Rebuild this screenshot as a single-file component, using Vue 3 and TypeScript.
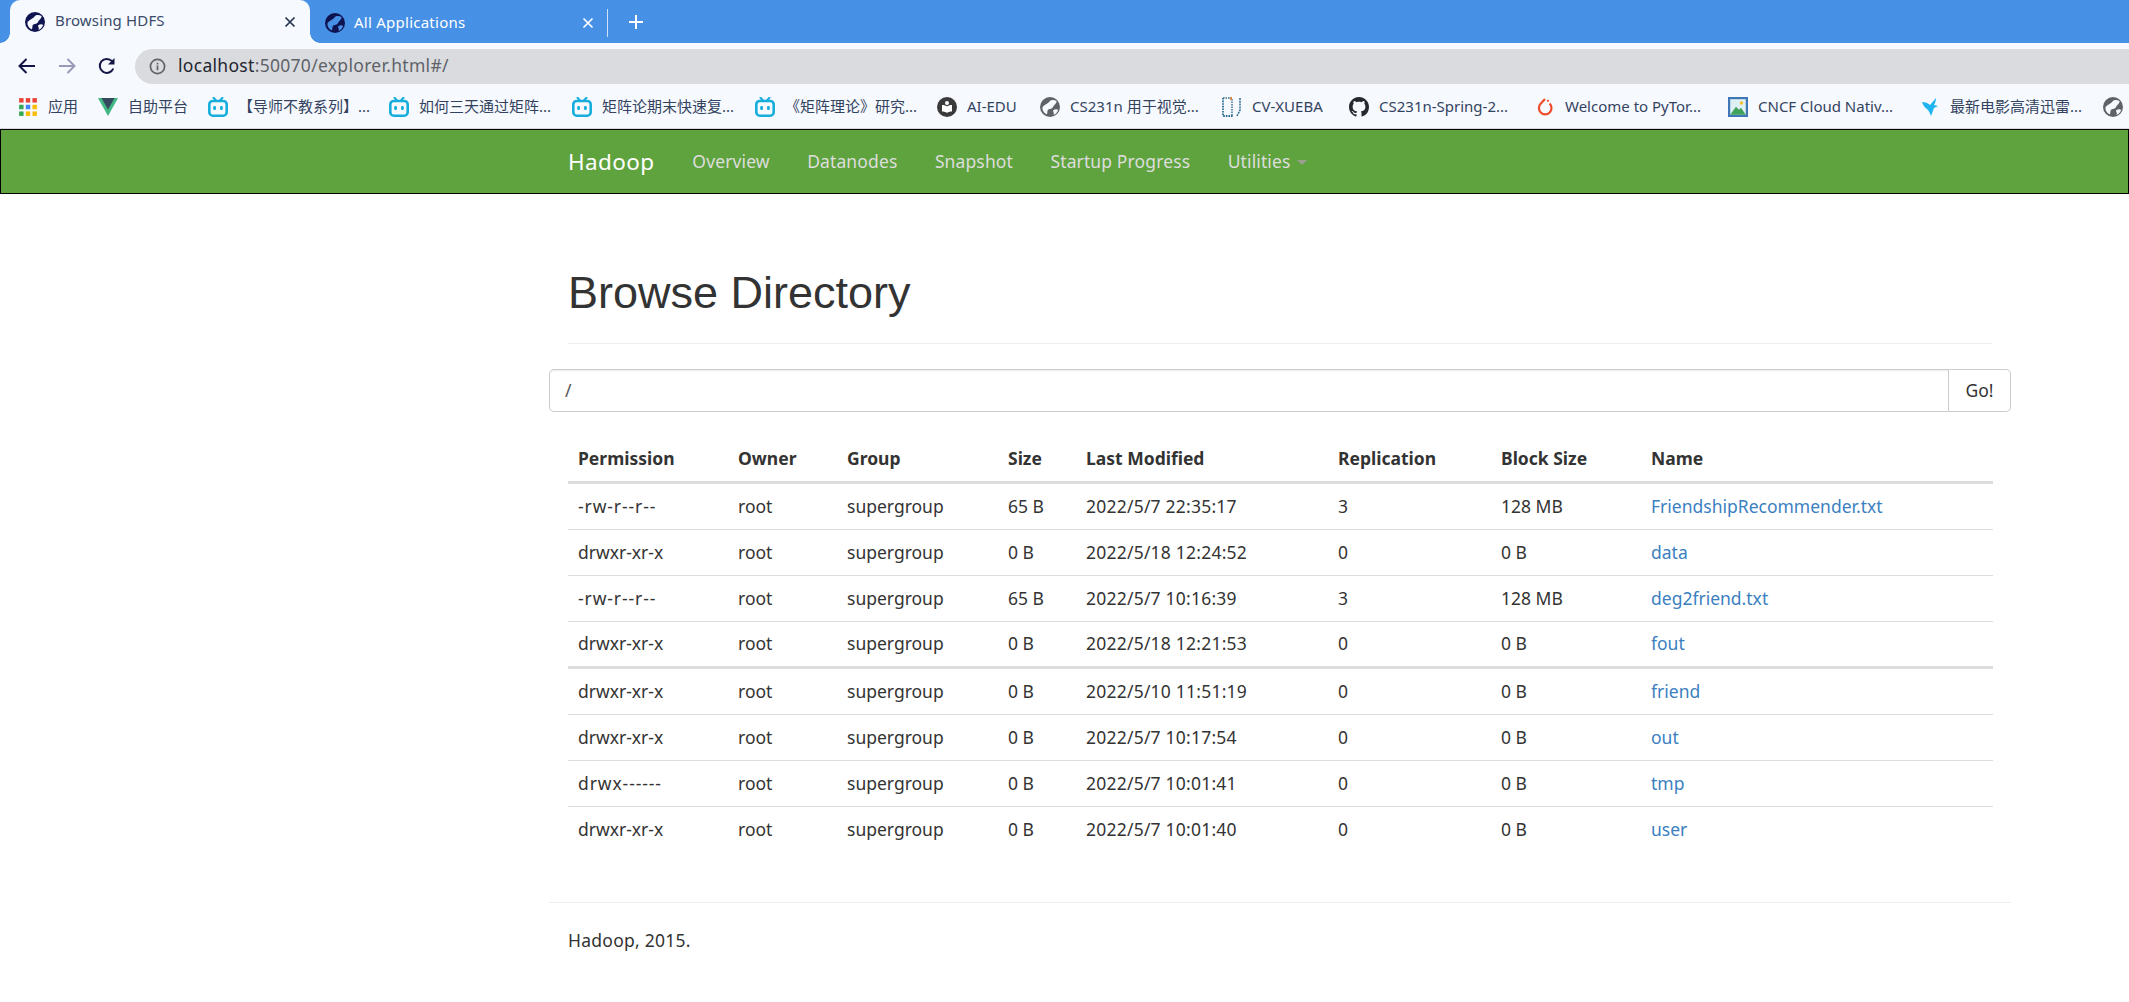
<script setup lang="ts">
interface Mark { icon: string; label: string; w: number }
const marks: Mark[] = [
  { icon: 'apps', label: '应用', w: 29 },
  { icon: 'vue', label: '自助平台', w: 59 },
  { icon: 'bili', label: '【导师不教系列】...', w: 130 },
  { icon: 'bili', label: '如何三天通过矩阵...', w: 132 },
  { icon: 'bili', label: '矩阵论期末快速复...', w: 132 },
  { icon: 'bili', label: '《矩阵理论》研究...', w: 131 },
  { icon: 'edu', label: 'AI-EDU', w: 52 },
  { icon: 'globe', label: 'CS231n 用于视觉...', w: 131 },
  { icon: 'cv', label: 'CV-XUEBA', w: 76 },
  { icon: 'github', label: 'CS231n-Spring-2...', w: 135 },
  { icon: 'torch', label: 'Welcome to PyTor...', w: 142 },
  { icon: 'cncf', label: 'CNCF Cloud Nativ...', w: 141 },
  { icon: 'bird', label: '最新电影高清迅雷...', w: 132 },
  { icon: 'globe', label: '', w: 0 },
]
const columns = ['Permission', 'Owner', 'Group', 'Size', 'Last Modified', 'Replication', 'Block Size', 'Name']
const rows = [
  ['-rw-r--r--', 'root', 'supergroup', '65 B', '2022/5/7 22:35:17', '3', '128 MB', 'FriendshipRecommender.txt'],
  ['drwxr-xr-x', 'root', 'supergroup', '0 B', '2022/5/18 12:24:52', '0', '0 B', 'data'],
  ['-rw-r--r--', 'root', 'supergroup', '65 B', '2022/5/7 10:16:39', '3', '128 MB', 'deg2friend.txt'],
  ['drwxr-xr-x', 'root', 'supergroup', '0 B', '2022/5/18 12:21:53', '0', '0 B', 'fout'],
  ['drwxr-xr-x', 'root', 'supergroup', '0 B', '2022/5/10 11:51:19', '0', '0 B', 'friend'],
  ['drwxr-xr-x', 'root', 'supergroup', '0 B', '2022/5/7 10:17:54', '0', '0 B', 'out'],
  ['drwx------', 'root', 'supergroup', '0 B', '2022/5/7 10:01:41', '0', '0 B', 'tmp'],
  ['drwxr-xr-x', 'root', 'supergroup', '0 B', '2022/5/7 10:01:40', '0', '0 B', 'user'],
]
const navItems = ['Overview', 'Datanodes', 'Snapshot', 'Startup Progress']
const swooshA = 'M2.500 10C5 7 8 7 10 4C11 2.800 14 2.500 16.500 4C17 6 14 8 13 10C11.500 13 8 11 7.500 14C7 16.500 7.500 18 6 17C3.500 15.500 2 13 2.500 10z'
const swooshB = 'M13 13.500C15 12 17 12 18.200 13C17.200 15.800 15.500 17.200 13.500 18C14.500 16 13 15 13 13.500z'
function hyphenated(v: string, j: number): boolean {
  return j === 0 && v.includes('--')
}
</script>

<template>
  <div class="app">
    <div class="tabstrip">
      <div class="tab active">
        <svg class="fav" viewBox="0 0 20 20"><circle cx="10" cy="10" r="10" fill="#0f1450" /><path :d="swooshA" fill="#f6f9fe" /><path :d="swooshB" fill="#f6f9fe" /></svg>
        <span class="tab-title">Browsing HDFS</span>
        <svg class="close" viewBox="0 0 12 12"><path d="M1.500 1.500l9 9M10.500 1.500l-9 9" stroke="#27324f" stroke-width="1.700" /></svg>
      </div>
      <div class="tab other">
        <svg class="fav" viewBox="0 0 20 20"><circle cx="10" cy="10" r="10" fill="#0f1450" /><path :d="swooshA" fill="#4690e6" /><path :d="swooshB" fill="#4690e6" /></svg>
        <span class="tab-title">All Applications</span>
        <svg class="close" viewBox="0 0 12 12"><path d="M1.500 1.500l9 9M10.500 1.500l-9 9" stroke="#fff" stroke-width="1.700" /></svg>
      </div>
      <svg class="plus" viewBox="0 0 16 16"><path d="M8 1v14M1 8h14" stroke="#fff" stroke-width="2" /></svg>
    </div>

    <div class="toolbar">
      <div class="nav-buttons">
        <svg viewBox="0 0 20 20"><path d="M18 10H3M9.500 3l-7 7 7 7" fill="none" stroke="#141645" stroke-width="2" /></svg>
        <svg viewBox="0 0 20 20"><path d="M2 10h15M10.500 3l7 7-7 7" fill="none" stroke="#9a9ab8" stroke-width="2" /></svg>
        <svg viewBox="0 0 20 20"><path d="M16.300 12.500A7 7 0 1 1 15 5.200" fill="none" stroke="#141645" stroke-width="2" /><path d="M17.500 2v6.500H11z" fill="#141645" /></svg>
      </div>
      <div class="address">
        <svg class="info" viewBox="0 0 18 18"><circle cx="9" cy="9" r="7.500" fill="none" stroke="#5f6368" stroke-width="1.800" /><path d="M8.100 8h1.800v5H8.100zM8.100 5h1.800v1.800H8.100z" fill="#5f6368" /></svg>
        <span class="url"><span class="host">localhost</span>:50070/explorer.html#/</span>
      </div>
    </div>

    <div class="bookmarks">
      <div v-for="(m, i) in marks" :key="i" class="mark">
        <svg v-if="m.icon === 'apps'" class="mi" viewBox="0 0 18 18">
          <rect x="1" y="1" width="4" height="4" fill="#ea4335" /><rect x="7" y="1" width="4" height="4" fill="#ea4335" /><rect x="13" y="1" width="4" height="4" fill="#ea4335" />
          <rect x="1" y="7" width="4" height="4" fill="#34a853" /><rect x="7" y="7" width="4" height="4" fill="#4285f4" /><rect x="13" y="7" width="4" height="4" fill="#fbbc05" />
          <rect x="1" y="13" width="4" height="4" fill="#34a853" /><rect x="7" y="13" width="4" height="4" fill="#fbbc05" /><rect x="13" y="13" width="4" height="4" fill="#fbbc05" />
        </svg>
        <svg v-else-if="m.icon === 'vue'" class="mi" viewBox="0 0 20 18">
          <path d="M0 0h20L10 18z" fill="#41b883" /><path d="M3.500 0h13L10 11.500z" fill="#35495e" />
        </svg>
        <svg v-else-if="m.icon === 'bili'" class="mi" viewBox="0 0 20 20">
          <path d="M5 0l3 3.500M15 0l-3 3.500" stroke="#17aede" stroke-width="2" />
          <rect x="1.300" y="4" width="17.400" height="14.700" rx="3.500" fill="none" stroke="#17aede" stroke-width="2.600" />
          <rect x="5.200" y="9" width="2.800" height="4" rx="1.200" fill="#17aede" /><rect x="12" y="9" width="2.800" height="4" rx="1.200" fill="#17aede" />
        </svg>
        <svg v-else-if="m.icon === 'edu'" class="mi" viewBox="0 0 20 20">
          <circle cx="10" cy="10" r="10" fill="#3a3a3a" /><path d="M5 8c2 0 4 .5 5 1.500C11 8.500 13 8 15 8v6.500c-2 0-4 .5-5 1.500-1-1-3-1.500-5-1.500z" fill="#fff" /><circle cx="10" cy="6" r="2" fill="#fff" />
        </svg>
        <svg v-else-if="m.icon === 'globe'" class="mi" viewBox="0 0 20 20"><circle cx="10" cy="10" r="10" fill="#5f6368" /><path :d="swooshA" fill="#f6f9fe" /><path :d="swooshB" fill="#f6f9fe" /></svg>
        <svg v-else-if="m.icon === 'cv'" class="mi" viewBox="0 0 20 20">
          <path d="M1 1v18h10" fill="none" stroke="#2f6d8f" stroke-width="1.800" stroke-dasharray="1.600 1" /><path d="M1 1h9v18" fill="none" stroke="#2f6d8f" stroke-width="1.400" stroke-dasharray="1.500 1" /><path d="M18 1v12l-3 6" fill="none" stroke="#2f6d8f" stroke-width="1.500" stroke-dasharray="2 .8" />
          <rect x="8" y="0" width="2" height="3" fill="#d68a4a" />
        </svg>
        <svg v-else-if="m.icon === 'github'" class="mi" viewBox="0 0 16 16"><path fill="#24292e" d="M8 0C3.580 0 0 3.580 0 8c0 3.540 2.290 6.530 5.470 7.590.4.070.55-.17.55-.38 0-.19-.01-.82-.01-1.490-2.010.37-2.530-.49-2.690-.94-.09-.23-.48-.94-.82-1.130-.28-.15-.68-.52-.01-.53.63-.01 1.080.58 1.230.82.72 1.210 1.870.87 2.330.66.07-.52.28-.87.51-1.070-1.780-.2-3.640-.89-3.640-3.950 0-.87.31-1.590.82-2.150-.08-.2-.36-1.020.08-2.120 0 0 .67-.21 2.200.82.64-.18 1.320-.27 2-.27.68 0 1.360.09 2 .27 1.530-1.040 2.200-.82 2.200-.82.44 1.100.16 1.920.08 2.120.51.56.82 1.270.82 2.150 0 3.070-1.870 3.750-3.650 3.950.29.25.54.73.54 1.480 0 1.070-.01 1.930-.01 2.200 0 .21.15.46.55.38A8.013 8.013 0 0016 8c0-4.420-3.580-8-8-8z" /></svg>
        <svg v-else-if="m.icon === 'torch'" class="mi" viewBox="0 0 20 20">
          <path d="M10 2L5.800 6.500a6.300 6.300 0 1 0 8.800 0" fill="none" stroke="#ee4c2c" stroke-width="2.200" /><circle cx="13" cy="3.800" r="1.100" fill="#ee4c2c" />
        </svg>
        <svg v-else-if="m.icon === 'cncf'" class="mi" viewBox="0 0 20 20">
          <rect x="0" y="0" width="20" height="20" fill="#3f76b5" /><rect x="2.200" y="2.200" width="15.600" height="15.600" fill="#dff0f4" /><circle cx="13.500" cy="6" r="1.800" fill="#f2c230" /><path d="M2.200 17.800l5.800-8 3 3 2-2 4.800 7z" fill="#3fa15a" />
        </svg>
        <svg v-else class="mi" viewBox="0 0 20 20">
          <path d="M2 5c3 0 6 1 8 3l6-7c0 3-1 5-2 7l4 1-4 2c-1 3-2 5-3 8-1-3-2-5-4-7C5 11 3 8 2 5z" fill="#1fb4f0" />
        </svg>
        <span v-if="m.label" class="ml" :style="{ width: m.w + 'px' }">{{ m.label }}</span>
      </div>
    </div>

    <nav class="navbar">
      <div class="nav-inner">
        <span class="brand">Hadoop</span>
        <span v-for="n in navItems" :key="n" class="nav-link">{{ n }}</span>
        <span class="nav-link">Utilities<i class="caret"></i></span>
      </div>
    </nav>

    <main class="container">
      <div class="page-header"><h1>Browse Directory</h1></div>
      <div class="input-group">
        <div class="input">/</div>
        <div class="go">Go!</div>
      </div>
      <table class="table">
        <colgroup>
          <col class="c1" /><col class="c2" /><col class="c3" /><col class="c4" /><col class="c5" /><col class="c6" /><col class="c7" /><col class="c8" />
        </colgroup>
        <thead>
          <tr><th v-for="c in columns" :key="c">{{ c }}</th></tr>
        </thead>
        <tbody>
          <tr v-for="(r, i) in rows" :key="i">
            <td v-for="(v, j) in r" :key="j" :class="{ dashes: hyphenated(v, j), date: j === 4 }"><a v-if="j === 7" class="link">{{ v }}</a><template v-else>{{ v }}</template></td>
          </tr>
        </tbody>
      </table>
      <div class="footer"><p>Hadoop, 2015.</p></div>
    </main>
  </div>
</template>

<style>
html, body { margin: 0; background: #fff; overflow: hidden; }
</style>

<style scoped>
.app {
  width: 2129px;
  height: 1002px;
  overflow: hidden;
  background: #fff;
  font-family: "Noto Sans", "Noto Sans CJK SC", sans-serif;
  color: #333;
}
.tabstrip {
  height: 43px;
  background: #4690e6;
  display: flex;
  align-items: stretch;
  padding-left: 10px;
}
.tab {
  display: flex;
  align-items: center;
  box-sizing: border-box;
  position: relative;
  font-size: 15px;
}
.tab.active {
  width: 300px;
  padding: 0 14px 0 15px;
  background: #f6f9fe;
  border-radius: 10px 10px 0 0;
  color: #3a4a68;
}
.tab.active::before,
.tab.active::after {
  content: "";
  position: absolute;
  bottom: 0;
  width: 10px;
  height: 10px;
}
.tab.active::before {
  left: -10px;
  background: radial-gradient(circle at 0 0, transparent 9.500px, #f6f9fe 10px);
}
.tab.active::after {
  right: -10px;
  background: radial-gradient(circle at 100% 0, transparent 9.500px, #f6f9fe 10px);
}
.tab.other {
  width: 298px;
  padding: 0 13px 0 15px;
  color: #fff;
  border-right: 1px solid #d0e2f8;
  margin: 9px 0 6px;
}
.tab.other .tab-title { letter-spacing: .25px; margin-left: 9px; padding-bottom: 3px; }
.fav { width: 20px; height: 20px; flex: none; }
.tab-title { flex: 1; margin-left: 10px; white-space: nowrap; padding-bottom: 3px; letter-spacing: .15px; }
.close { width: 12px; height: 12px; flex: none; }
.plus { width: 16px; height: 16px; margin: 14px 0 0 20px; }
.toolbar {
  height: 42px;
  background: #f6f9fe;
  display: flex;
  align-items: center;
  padding-top: 4px;
  box-sizing: border-box;
}
.nav-buttons {
  width: 135px;
  flex: none;
  display: flex;
  gap: 20px;
  padding-left: 17px;
  box-sizing: border-box;
}
.nav-buttons svg { width: 20px; height: 20px; }
.address {
  flex: 1;
  height: 35px;
  background: #dadbdf;
  border-radius: 18px 0 0 18px;
  display: flex;
  align-items: center;
  padding-left: 14px;
}
.info { width: 17px; height: 17px; }
.url {
  margin-left: 12px;
  font-size: 17.500px;
  letter-spacing: .3px;
  color: #5f6368;
  white-space: nowrap;
  padding-bottom: 2px;
}
.host { color: #1f2430; }
.bookmarks {
  height: 44px;
  background: #f6f9fe;
  box-sizing: border-box;
  border-bottom: 1px solid #d5d7de;
  display: flex;
  align-items: center;
  gap: 21px;
  padding-left: 18px;
  white-space: nowrap;
}
.mark { display: flex; align-items: center; gap: 10px; flex: none; }
.mi { width: 20px; height: 20px; flex: none; }
.ml { font-size: 15px; color: #33435f; white-space: nowrap; padding-bottom: 2px; }
.navbar {
  height: 65px;
  box-sizing: border-box;
  background: #5fa33e;
  border: 1px solid #000;
}
.nav-inner {
  margin-left: 567px;
  height: 63px;
  display: flex;
  align-items: center;
  white-space: nowrap;
}
.brand { color: #fff; font-size: 22.500px; letter-spacing: .4px; margin-right: 19px; }
.nav-link { color: #ddd; font-size: 17.500px; letter-spacing: .12px; padding: 0 18.750px 2px; }
.caret {
  display: inline-block;
  margin-left: 7px;
  vertical-align: middle;
  border-top: 5px solid #9aa08f;
  border-left: 5px solid transparent;
  border-right: 5px solid transparent;
}
.container {
  margin-left: 549px;
  width: 1462px;
}
.page-header {
  margin: 74px 19px 25px;
  padding-bottom: 25px;
  border-bottom: 1px solid #eee;
}
h1 {
  margin: 0;
  font-family: "Liberation Sans", Arial, sans-serif;
  font-weight: 400;
  font-size: 45px;
  line-height: 50px;
  color: #333;
}
.input-group { display: flex; height: 43px; font-size: 17.500px; }
.input {
  flex: 1;
  box-sizing: border-box;
  border: 1px solid #ccc;
  border-radius: 5px 0 0 5px;
  padding-left: 15px;
  line-height: 40px;
  color: #555;
  box-shadow: inset 0 1px 1px rgba(0, 0, 0, .075);
}
.go {
  width: 62px;
  box-sizing: border-box;
  border: 1px solid #ccc;
  border-left: 0;
  border-radius: 0 5px 5px 0;
  text-align: center;
  line-height: 40px;
  color: #333;
}
.table {
  margin: 23px 18px 0 19px;
  width: 1425px;
  table-layout: fixed;
  border-collapse: separate;
  border-spacing: 0;
  font-size: 17.500px;
}
.c1 { width: 160px; } .c2 { width: 109px; } .c3 { width: 161px; } .c4 { width: 78px; }
.c5 { width: 252px; } .c6 { width: 163px; } .c7 { width: 150px; } .c8 { width: 352px; }
th {
  height: 49px;
  box-sizing: border-box;
  padding: 0 10px;
  text-align: left;
  font-weight: 700;
  border-bottom: 3px solid #ddd;
}
td {
  height: 46px;
  box-sizing: border-box;
  padding: 0 10px 2px;
  border-bottom: 1px solid #ddd;
  white-space: nowrap;
}
td.dashes { letter-spacing: .9px; }
td.date { letter-spacing: .22px; }
tbody tr:nth-child(4) td { height: 47px; border-bottom-width: 3px; }
tbody tr:last-child td { border-bottom: 0; }
.link { color: #3b7fc1; }
.footer {
  margin-top: 49px;
  border-top: 1px solid #eee;
  padding: 25px 19px 0;
  font-size: 17.500px;
  letter-spacing: .25px;
  line-height: 25px;
}
.footer p { margin: 0; }
</style>
